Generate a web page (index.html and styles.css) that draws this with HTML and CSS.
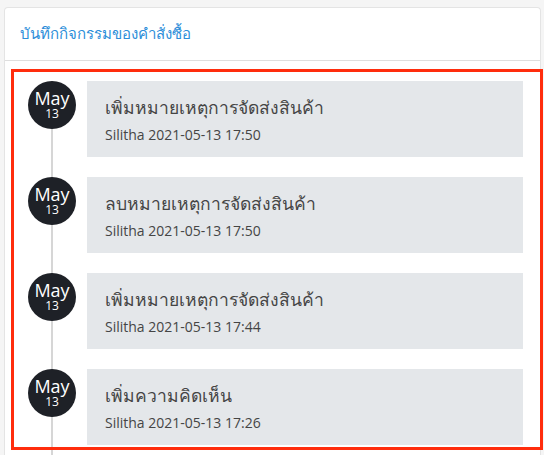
FILE: index.html
```html
<!DOCTYPE html>
<html lang="th">
<head>
  <meta charset="UTF-8" />
  <meta name="viewport" content="width=device-width, initial-scale=1.0" />
  <title>บันทึกกิจกรรมของคำสั่งซื้อ</title>
  <link rel="stylesheet" href="styles.css">
</head>
<body>
  <div class="card">
    <div class="card-header">
      <h2 class="card-title">บันทึกกิจกรรมของคำสั่งซื้อ</h2>
    </div>
    <div class="card-body">
      <div class="highlight">
        <ul class="timeline">
          <li class="event">
            <div class="date"><span class="month">May</span><span class="day">13</span></div>
            <div class="detail">
              <div class="action">เพิ่มหมายเหตุการจัดส่งสินค้า</div>
              <div class="meta">Silitha 2021-05-13 17:50</div>
            </div>
          </li>
          <li class="event">
            <div class="date"><span class="month">May</span><span class="day">13</span></div>
            <div class="detail">
              <div class="action">ลบหมายเหตุการจัดส่งสินค้า</div>
              <div class="meta">Silitha 2021-05-13 17:50</div>
            </div>
          </li>
          <li class="event">
            <div class="date"><span class="month">May</span><span class="day">13</span></div>
            <div class="detail">
              <div class="action">เพิ่มหมายเหตุการจัดส่งสินค้า</div>
              <div class="meta">Silitha 2021-05-13 17:44</div>
            </div>
          </li>
          <li class="event">
            <div class="date"><span class="month">May</span><span class="day">13</span></div>
            <div class="detail">
              <div class="action">เพิ่มความคิดเห็น</div>
              <div class="meta">Silitha 2021-05-13 17:26</div>
            </div>
          </li>
        </ul>
      </div>
    </div>
  </div>
</body>
</html>
```

FILE: styles.css
```css
/* บันทึกกิจกรรม */

html,
body {
  height: 455px;
  overflow: hidden;
}

body {
  margin: 0;
  background-color: #f5f5f5;
  font-family: "Open Sans", "Noto Sans", sans-serif;
  color: #454545;
}

.card {
  margin: 7px 3px 0 4px;
  background-color: #fff;
  border: 1px solid #e4e4e4;
  border-bottom: none;
  border-radius: 4px 4px 0 0;
  height: 447px;
}

.card-header {
  height: 52px;
  padding: 0 15px;
  display: flex;
  align-items: center;
  border-bottom: 1px solid #dedede;
}

.card-title {
  margin: 0;
  font-size: 15px;
  font-weight: 400;
  color: #2d8ed9;
}

.card-body {
  padding: 8px 0 0 6px;
}

.highlight {
  position: relative;
  margin-right: -3px;
  padding: 12px 20px 2px 17px;
}

/* กรอบสีแดงทับด้านบน */
.highlight::after {
  content: "";
  position: absolute;
  top: 0;
  left: 0;
  right: 0;
  height: 375px;
  border: 3px solid #ff2d0d;
  z-index: 2;
}

.timeline {
  position: relative;
  list-style: none;
  margin: 0;
  padding: 0;
}

.timeline::before {
  content: "";
  position: absolute;
  left: 23px;
  top: 0;
  bottom: -40px;
  width: 2px;
  background-color: #d6d6d6;
}

.event {
  display: flex;
  gap: 11px;
  margin-bottom: 20px;
}

.date {
  position: relative;
  z-index: 1;
  flex: 0 0 48px;
  width: 48px;
  height: 48px;
  border-radius: 50%;
  background-color: #1e2127;
  color: #fff;
  display: flex;
  flex-direction: column;
  align-items: center;
  justify-content: center;
}

.month {
  font-size: 18px;
  line-height: 17px;
  font-weight: 500;
}

.day {
  font-size: 12px;
  line-height: 13px;
}

.detail {
  flex: 1;
  height: 76px;
  padding: 0 18px;
  box-sizing: border-box;
  background-color: #e4e7ea;
  display: flex;
  flex-direction: column;
  justify-content: center;
}

.action {
  font-size: 17.5px;
  line-height: 24px;
  margin-bottom: 7px;
}

.meta {
  font-size: 14px;
  line-height: 18px;
}
```
